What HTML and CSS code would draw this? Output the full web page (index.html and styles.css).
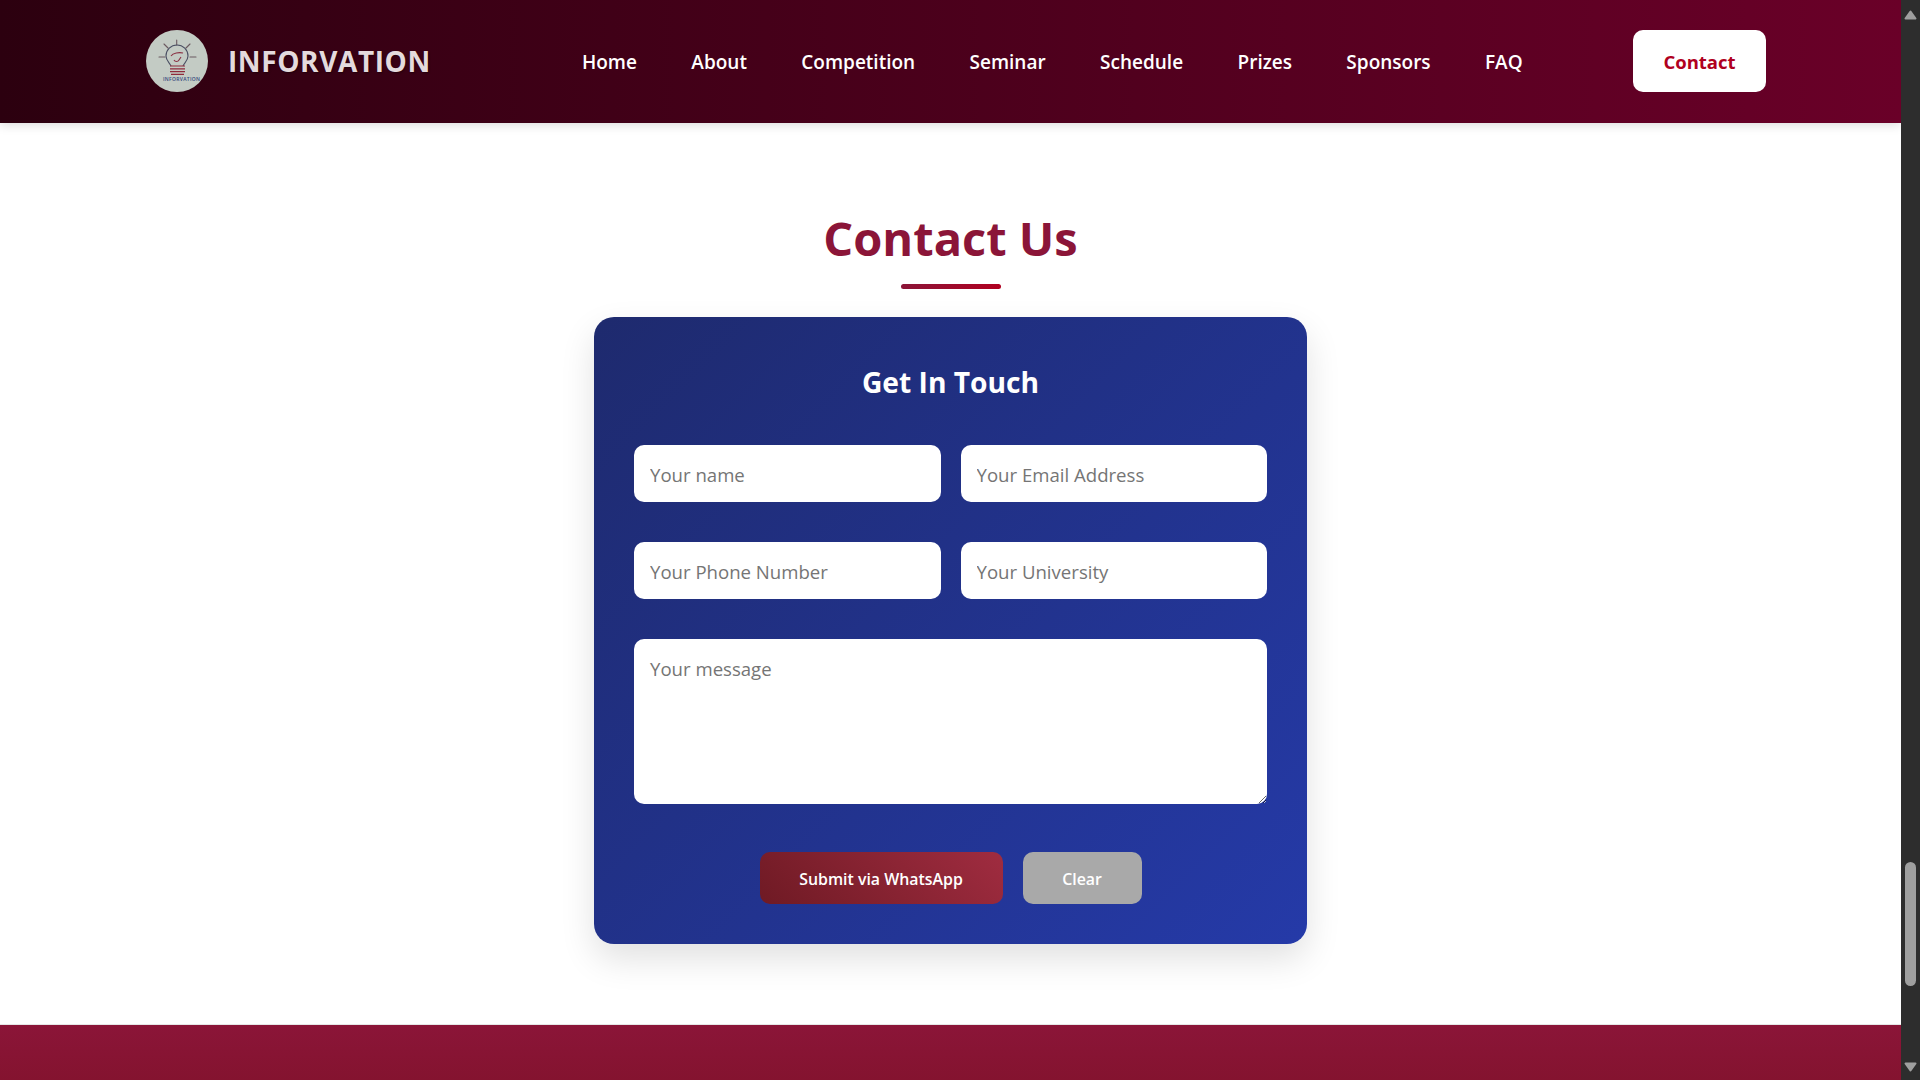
FILE: index.html
```html
<!DOCTYPE html>
<html>

<head>
    <title>Inforvation</title>
    <link rel="stylesheet" href="styles.css">
</head>

<body>
    <div class="window">
        <div class="page">
            <header class="topbar">
                <div class="brand">
                    <svg class="brand_logo" viewBox="0 0 62 62">
                        <circle cx="31" cy="31" r="31" fill="#c3cbc4" />
                        <g stroke="#6b5a60" stroke-width="1.1" stroke-linecap="round">
                            <path d="M30.7 10v5M18 14l4 4M44 14l-4 4M13 27h6M44 27h6" />
                        </g>
                        <path d="M25 36c-1-3-5-5-5-10a11 11 0 0 1 22 0c0 5-4 7-5 10" fill="none" stroke="#4a4f63" stroke-width="1.1" />
                        <path d="M25 26c2-3 8-4 12-3M28 30c1 2 4 2 5 0l2-3" fill="none" stroke="#8a2f42" stroke-width="1.1" />
                        <g stroke="#8f2a3b" stroke-width="1.2">
                            <path d="M24 36h15M24 38.800h15M24 41.600h15M25 44.400h13" />
                        </g>
                        <text class="logo_word" x="17" y="51" textLength="37">INFORVATION</text>
                    </svg>
                    <span class="brand_name">INFORVATION</span>
                </div>
                <nav class="nav_links">
                    <a href="#">Home</a>
                    <a href="#">About</a>
                    <a href="#">Competition</a>
                    <a href="#">Seminar</a>
                    <a href="#">Schedule</a>
                    <a href="#">Prizes</a>
                    <a href="#">Sponsors</a>
                    <a href="#">FAQ</a>
                </nav>
                <a class="contact_btn" href="#">Contact</a>
            </header>

            <main class="contact">
                <h1 class="contact_title">Contact Us</h1>
                <div class="title_rule"></div>
                <form class="card">
                    <h2 class="card_title">Get In Touch</h2>
                    <div class="field_grid">
                        <input class="field" type="text" placeholder="Your name">
                        <input class="field" type="text" placeholder="Your Email Address">
                        <input class="field" type="text" placeholder="Your Phone Number">
                        <input class="field" type="text" placeholder="Your University">
                    </div>
                    <textarea class="field message" placeholder="Your message"></textarea>
                    <div class="actions">
                        <button class="btn submit" type="button">Submit via WhatsApp</button>
                        <button class="btn clear" type="reset">Clear</button>
                    </div>
                </form>
            </main>

            <footer class="footer"></footer>
        </div>

        <div class="scrollbar">
            <svg class="arrow up" viewBox="0 0 13 10"><path d="M6.500 1.500L11.500 8.500H1.500Z" /></svg>
            <div class="track"><div class="thumb"></div></div>
            <svg class="arrow down" viewBox="0 0 13 10"><path d="M1.500 1.500H11.500L6.500 8.500Z" /></svg>
        </div>
    </div>
</body>

</html>
```

FILE: styles.css
```css
* {
    box-sizing: border-box
}

body {
    margin: 0;
    background: #fff;
    font-family: "Open Sans", "Noto Sans", sans-serif;
    overflow: hidden
}

.window {
    display: flex;
    height: 100vh
}

.page {
    flex: 1;
    min-width: 0;
    display: flex;
    flex-direction: column
}

/* top bar */
.topbar {
    height: 123px;
    flex: none;
    display: flex;
    align-items: center;
    padding: 0 135px 1px 146px;
    background: linear-gradient(90deg, #2c000f, #6a0028);
    box-shadow: 0 2px 10px rgba(0, 0, 0, 0.15)
}

.brand {
    display: flex;
    align-items: center;
    gap: 20px;
    width: 436px
}

.brand_logo {
    width: 62px;
    height: 62px
}

.logo_word {
    font-size: 5px;
    font-weight: 600;
    fill: #34477c
}

.brand_name {
    font-size: 28px;
    font-weight: 700;
    letter-spacing: 0.6px;
    color: #e4dadd;
    text-shadow: 1px 1px 2px rgba(0, 0, 0, 0.4)
}

.nav_links {
    flex: 1;
    display: flex;
    gap: 54.400px;
    padding-top: 2px
}

.nav_links a {
    color: #fff;
    font-size: 19px;
    font-weight: 600;
    text-decoration: none
}

.contact_btn {
    width: 133px;
    height: 62px;
    display: flex;
    align-items: center;
    justify-content: center;
    background: #fff;
    border-radius: 10px;
    color: #b00020;
    font-size: 18.500px;
    font-weight: 700;
    text-decoration: none
}

/* contact section */
.contact {
    flex: 1;
    display: flex;
    flex-direction: column;
    align-items: center;
    padding-top: 85px
}

.contact_title {
    margin: 0;
    height: 61px;
    line-height: 61px;
    font-size: 47px;
    font-weight: 700;
    color: #8b1538
}

.title_rule {
    width: 100px;
    height: 5px;
    margin-top: 15px;
    border-radius: 3px;
    background: linear-gradient(90deg, #8b1538, #b00020)
}

.card {
    width: 713px;
    height: 627px;
    margin-top: 28px;
    padding: 40px;
    border-radius: 20px;
    background: linear-gradient(135deg, #1e2a6e, #253aa8);
    box-shadow: 0 15px 35px rgba(0, 0, 0, 0.12)
}

.card_title {
    margin: 0 0 40px;
    height: 48px;
    line-height: 50px;
    text-align: center;
    font-size: 28.200px;
    font-weight: 700;
    color: #fff
}

.field_grid {
    display: grid;
    grid-template-columns: 1fr 1fr;
    gap: 40px 20px
}

.field {
    display: block;
    width: 100%;
    height: 57px;
    padding: 2px 15px 0 16px;
    border: 0;
    border-radius: 10px;
    background: #fff;
    font-family: inherit;
    font-size: 18.600px;
    color: #333
}

.field::placeholder {
    color: #757575
}

.message {
    height: 165px;
    margin-top: 40px;
    padding: 17px 15px 17px 16px;
    resize: vertical
}

.actions {
    display: flex;
    justify-content: center;
    gap: 20px;
    margin-top: 48px
}

.btn {
    height: 52px;
    padding: 2px 0 0;
    border: 0;
    border-radius: 10px;
    color: #fff;
    font-family: inherit;
    font-size: 15.900px;
    font-weight: 600
}

.submit {
    width: 243px;
    background: linear-gradient(45deg, #6f1a24, #a02c40)
}

.clear {
    width: 119px;
    background: #a9a9a9
}

.footer {
    height: 56px;
    flex: none;
    border-top: 1px solid #e6e6e6;
    background: linear-gradient(180deg, #8b1538, #84132f)
}

/* browser scrollbar */
.scrollbar {
    width: 19px;
    flex: none;
    display: flex;
    flex-direction: column;
    align-items: center;
    background: #2d2d2d
}

.track {
    flex: 1;
    width: 100%;
    display: flex;
    flex-direction: column;
    justify-content: flex-end;
    padding: 0 4px 76px
}

.thumb {
    height: 124px;
    border-radius: 6px;
    background: #9f9f9f
}

.arrow {
    width: 13px;
    height: 10px;
    flex: none;
    fill: #9f9f9f;
    stroke: #9f9f9f;
    stroke-width: 2;
    stroke-linejoin: round
}

.up {
    margin-top: 10px
}

.down {
    margin-bottom: 8px
}
```
